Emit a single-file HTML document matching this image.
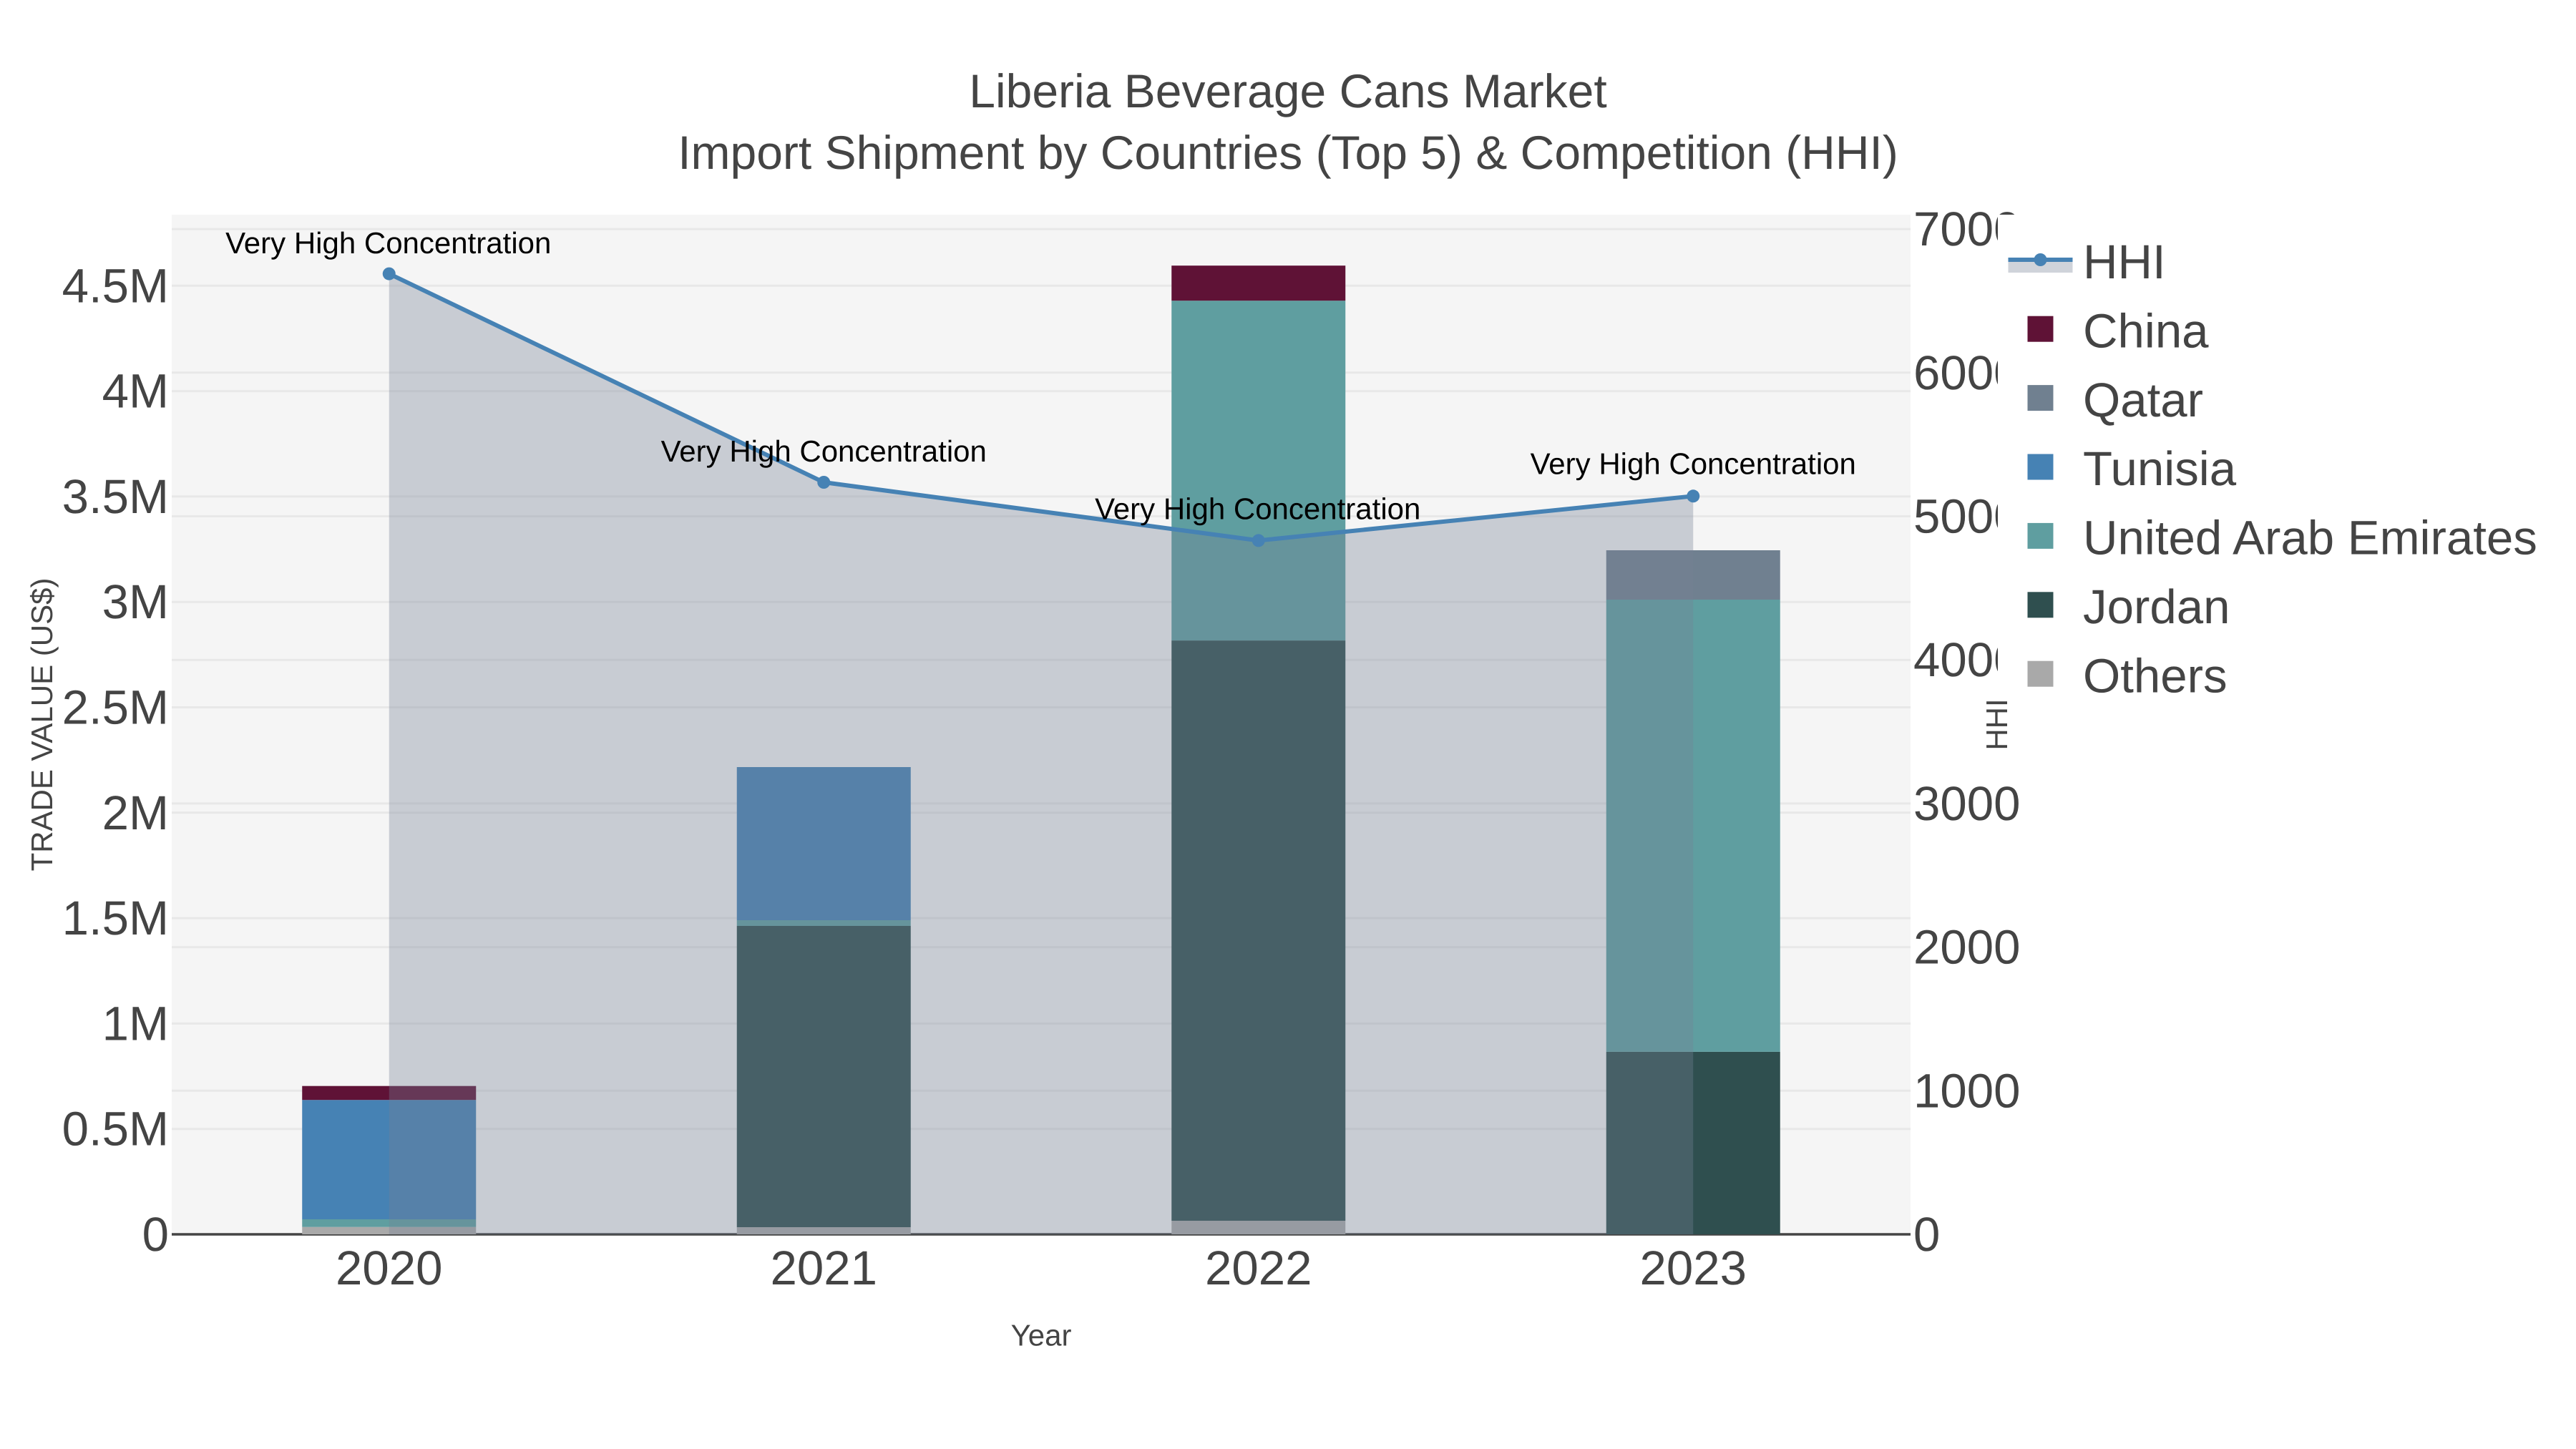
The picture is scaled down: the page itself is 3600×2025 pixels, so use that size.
<!DOCTYPE html>
<html>
<head>
<meta charset="utf-8">
<title>Liberia Beverage Cans Market</title>
<style>
html,body{margin:0;padding:0;background:#fff;width:3600px;height:2025px;overflow:hidden}
svg{display:block}
text{font-family:"Liberation Sans",Arial,sans-serif;text-rendering:geometricPrecision;fill:#444}
.t66{font-size:66px}
.tk{font-size:67.2px}
.t42{font-size:42px}
.an{font-size:42px;fill:#000;text-anchor:middle}
.gl line{stroke:#e8e8e8;stroke-width:3}
</style>
</head>
<body>
<svg width="3600" height="2025" viewBox="0 0 3600 2025" xmlns="http://www.w3.org/2000/svg">
<rect width="3600" height="2025" fill="#fff"/>
<rect x="240" y="300" width="2430" height="1425" fill="#f5f5f5"/>

<!-- grid -->
<g class="gl">
<line x1="240" x2="2670" y1="1577.7" y2="1577.7"/>
<line x1="240" x2="2670" y1="1430.4" y2="1430.4"/>
<line x1="240" x2="2670" y1="1283.1" y2="1283.1"/>
<line x1="240" x2="2670" y1="1135.8" y2="1135.8"/>
<line x1="240" x2="2670" y1="988.5" y2="988.5"/>
<line x1="240" x2="2670" y1="841.2" y2="841.2"/>
<line x1="240" x2="2670" y1="693.9" y2="693.9"/>
<line x1="240" x2="2670" y1="546.6" y2="546.6"/>
<line x1="240" x2="2670" y1="399.3" y2="399.3"/>
<line x1="240" x2="2670" y1="1524.3" y2="1524.3"/>
<line x1="240" x2="2670" y1="1323.6" y2="1323.6"/>
<line x1="240" x2="2670" y1="1122.9" y2="1122.9"/>
<line x1="240" x2="2670" y1="922.2" y2="922.2"/>
<line x1="240" x2="2670" y1="721.5" y2="721.5"/>
<line x1="240" x2="2670" y1="520.8" y2="520.8"/>
<line x1="240" x2="2670" y1="320.1" y2="320.1"/>
</g>
<line x1="240" x2="2670" y1="1725" y2="1725" stroke="#444" stroke-width="3.6"/>

<!-- bars 2020 -->
<rect x="422.25" y="1714.7" width="243" height="10.3" fill="#a9a9a9"/>
<rect x="422.25" y="1704" width="243" height="10.7" fill="#5f9ea0"/>
<rect x="422.25" y="1537.2" width="243" height="166.8" fill="#4682b4"/>
<rect x="422.25" y="1517.7" width="243" height="19.5" fill="#5f1236"/>
<!-- bars 2021 -->
<rect x="1029.75" y="1715" width="243" height="10" fill="#a9a9a9"/>
<rect x="1029.75" y="1294" width="243" height="421" fill="#2f4f4f"/>
<rect x="1029.75" y="1286" width="243" height="8" fill="#5f9ea0"/>
<rect x="1029.75" y="1072" width="243" height="214" fill="#4682b4"/>
<!-- bars 2022 -->
<rect x="1637.25" y="1706" width="243" height="19" fill="#a9a9a9"/>
<rect x="1637.25" y="895.1" width="243" height="810.9" fill="#2f4f4f"/>
<rect x="1637.25" y="420.2" width="243" height="474.9" fill="#5f9ea0"/>
<rect x="1637.25" y="371.2" width="243" height="49" fill="#5f1236"/>
<!-- bars 2023 -->
<rect x="2244.75" y="1469.9" width="243" height="255.1" fill="#2f4f4f"/>
<rect x="2244.75" y="838" width="243" height="631.9" fill="#5f9ea0"/>
<rect x="2244.75" y="769" width="243" height="69" fill="#708090"/>

<!-- HHI fill and line -->
<polygon points="543.75,382.6 1151.25,674 1758.75,755.4 2366.25,693.3 2366.25,1725 543.75,1725" fill="rgb(118,130,148)" fill-opacity="0.35"/>
<polyline points="543.75,382.6 1151.25,674 1758.75,755.4 2366.25,693.3" fill="none" stroke="#4682b4" stroke-width="6" stroke-linejoin="round"/>
<circle cx="543.75" cy="382.6" r="9" fill="#4682b4"/>
<circle cx="1151.25" cy="674" r="9" fill="#4682b4"/>
<circle cx="1758.75" cy="755.4" r="9" fill="#4682b4"/>
<circle cx="2366.25" cy="693.3" r="9" fill="#4682b4"/>

<!-- annotations -->
<text class="an" x="542.75" y="354">Very High Concentration</text>
<text class="an" x="1151.25" y="645">Very High Concentration</text>
<text class="an" x="1757.75" y="725.6">Very High Concentration</text>
<text class="an" x="2366.25" y="662.7">Very High Concentration</text>

<!-- title -->
<text class="t66" x="1800" y="150" text-anchor="middle">Liberia Beverage Cans Market</text>
<text class="t66" x="1800" y="235.8" text-anchor="middle">Import Shipment by Countries (Top 5) &amp; Competition (HHI)</text>

<!-- left ticks -->
<g class="tk" text-anchor="end">
<text x="236" y="1748">0</text>
<text x="236" y="1600.7">0.5M</text>
<text x="236" y="1453.4">1M</text>
<text x="236" y="1306.1">1.5M</text>
<text x="236" y="1158.8">2M</text>
<text x="236" y="1011.5">2.5M</text>
<text x="236" y="864.2">3M</text>
<text x="236" y="716.9">3.5M</text>
<text x="236" y="569.6">4M</text>
<text x="236" y="422.3">4.5M</text>
</g>

<!-- right ticks -->
<g class="tk" text-anchor="start">
<text x="2674" y="1748">0</text>
<text x="2674" y="1547.3">1000</text>
<text x="2674" y="1346.6">2000</text>
<text x="2674" y="1145.9">3000</text>
<text x="2674" y="945.2">4000</text>
<text x="2674" y="744.5">5000</text>
<text x="2674" y="543.8">6000</text>
<text x="2674" y="343.1">7000</text>
</g>

<!-- x ticks -->
<g class="tk" text-anchor="middle">
<text x="543.75" y="1795">2020</text>
<text x="1151.25" y="1795">2021</text>
<text x="1758.75" y="1795">2022</text>
<text x="2366.25" y="1795">2023</text>
</g>

<!-- axis titles -->
<text class="t42" x="1455" y="1880.7" text-anchor="middle">Year</text>
<text class="t42" transform="translate(73 1012.5) rotate(-90)" text-anchor="middle">TRADE VALUE (US$)</text>

<!-- legend -->
<rect x="2792" y="300" width="808" height="700" fill="#fff"/>
<rect x="2806.5" y="363" width="90" height="18" fill="rgb(118,130,148)" fill-opacity="0.35"/>
<line x1="2806.5" x2="2896.5" y1="363" y2="363" stroke="#4682b4" stroke-width="6"/>
<circle cx="2851.5" cy="363" r="9" fill="#4682b4"/>
<rect x="2833.5" y="441.7" width="36" height="36" fill="#5f1236"/>
<rect x="2833.5" y="538.1" width="36" height="36" fill="#708090"/>
<rect x="2833.5" y="634.5" width="36" height="36" fill="#4682b4"/>
<rect x="2833.5" y="730.9" width="36" height="36" fill="#5f9ea0"/>
<rect x="2833.5" y="827.3" width="36" height="36" fill="#2f4f4f"/>
<rect x="2833.5" y="923.7" width="36" height="36" fill="#a9a9a9"/>
<g class="tk">
<text x="2911" y="389">HHI</text>
<text x="2911" y="485.4">China</text>
<text x="2911" y="581.8">Qatar</text>
<text x="2911" y="678.2">Tunisia</text>
<text x="2911" y="774.6">United Arab Emirates</text>
<text x="2911" y="871">Jordan</text>
<text x="2911" y="967.4">Others</text>
</g>
<text class="t42" transform="translate(2805 1012.5) rotate(-90)" text-anchor="middle">HHI</text>
</svg>
</body>
</html>
